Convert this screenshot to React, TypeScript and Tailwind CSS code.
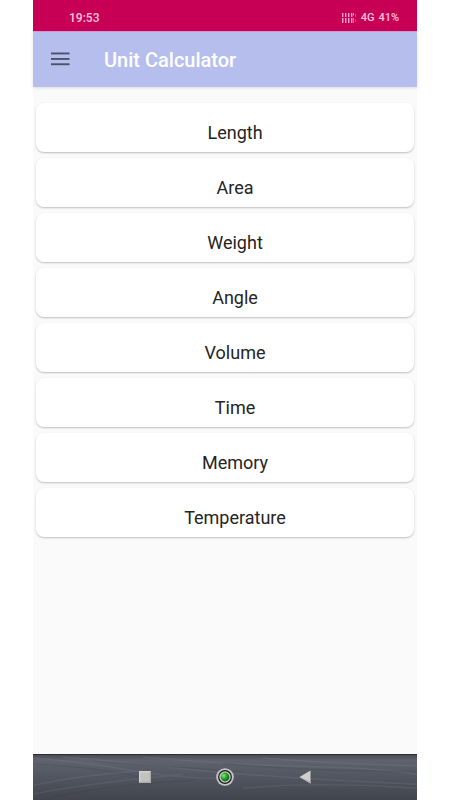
import React from 'react';

const UNITS = ['Length', 'Area', 'Weight', 'Angle', 'Volume', 'Time', 'Memory', 'Temperature'];

const SignalIcon: React.FC = () => (
    <svg width="15" height="10" viewBox="0 0 15 10" fill="#f6a6cc" aria-hidden="true">
        {[0, 3, 6, 9].map((x) => (
            <g key={x}>
                <rect x={x} y="0" width="1.4" height="4" />
                <rect x={x} y="5" width="1.4" height="5" />
            </g>
        ))}
        <rect x="11" y="0" width="1" height="2.5" opacity="0.9" />
        <rect x="11" y="5" width="1" height="5" opacity="0.6" />
        <rect x="13" y="1" width="1" height="3" opacity="0.35" />
        <rect x="13" y="6" width="1" height="3" opacity="0.35" />
    </svg>
);

const StatusBar: React.FC = () => (
    <div className="flex h-8 items-center justify-between border-b border-[#d79bd3] bg-[#c70055] pl-9 pr-[18px] pt-1 text-[#fcc4df]">
        <span className="text-xs font-medium leading-4">19:53</span>
        <div className="flex items-center gap-1 text-[11px] font-medium leading-4">
            <SignalIcon />
            <span>4G</span>
            <span>41%</span>
        </div>
    </div>
);

const AppBar: React.FC = () => (
    <header className="relative flex h-[55px] items-center gap-[34px] bg-[#b6beee] pb-0.5 pl-[18px] shadow-[0_1px_3px_rgba(0,0,0,0.12)]">
        <button type="button" aria-label="Open menu" className="flex">
            <svg width="19" height="14" viewBox="0 0 19 14" fill="#4d516b" aria-hidden="true">
                <rect x="0" y="0.5" width="18.5" height="1.9" />
                <rect x="0" y="6" width="18.5" height="1.9" />
                <rect x="0" y="11.3" width="18.5" height="1.9" />
            </svg>
        </button>
        <h1 className="pt-0.5 text-xl font-medium leading-6 text-white">Unit Calculator</h1>
    </header>
);

const NavBar: React.FC = () => (
    <nav className="relative h-[46px] overflow-hidden border-t border-[#2c2d35] bg-[#4c505a]">
        <svg className="absolute inset-0 h-full w-full" viewBox="0 0 384 46" preserveAspectRatio="none" aria-hidden="true">
            <defs>
                <linearGradient id="metal" x1="0" y1="0" x2="0" y2="1">
                    <stop offset="0" stopColor="#4a4c55" />
                    <stop offset="0.12" stopColor="#5f636d" />
                    <stop offset="0.5" stopColor="#51555f" />
                    <stop offset="1" stopColor="#42454e" />
                </linearGradient>
            </defs>
            <rect width="384" height="46" fill="url(#metal)" />
            <g fill="none" stroke="#9ea3ae" strokeWidth="1.5" opacity="0.13">
                <path d="M0 3 Q50 7 100 16 T200 24" />
                <path d="M30 2 Q100 8 160 15 T384 30" />
                <path d="M110 2 Q200 10 280 12 T384 20" />
                <path d="M230 3 Q300 9 384 11" />
                <path d="M0 40 Q60 28 150 20" />
                <path d="M0 31 Q50 20 110 16" />
                <path d="M210 34 Q280 27 384 34" />
            </g>
            <g fill="none" stroke="#32353e" strokeWidth="1.5" opacity="0.15">
                <path d="M0 9 Q60 12 110 23" />
                <path d="M60 6 Q130 12 210 17" />
                <path d="M190 9 Q280 17 384 17" />
                <path d="M20 43 Q80 30 160 26" />
            </g>
        </svg>
        <div className="relative flex h-full items-center justify-center gap-[62px] pb-0.5">
            <button type="button" aria-label="Recent apps" className="flex w-[18px] justify-center">
                <svg width="14" height="14" viewBox="0 0 14 14" aria-hidden="true">
                    <rect x="1" y="1" width="12" height="12" fill="#c2c3c1" />
                    <path d="M1 13V1h12l-1.5 1.5h-9v9z" fill="#d2d3d1" />
                    <path d="M13 1v12H1l1.5-1.5h9v-9z" fill="#adaeac" />
                </svg>
            </button>
            <button type="button" aria-label="Home" className="flex">
                <svg width="18" height="18" viewBox="0 0 18 18" aria-hidden="true">
                    <defs>
                        <radialGradient id="led" cx="0.35" cy="0.35" r="0.7">
                            <stop offset="0" stopColor="#8fe08a" />
                            <stop offset="0.45" stopColor="#31ad30" />
                            <stop offset="1" stopColor="#0b5c10" />
                        </radialGradient>
                    </defs>
                    <circle cx="9" cy="9" r="8.8" fill="#c4c5c3" />
                    <circle cx="9" cy="9" r="6.9" fill="#17181b" />
                    <circle cx="9" cy="9" r="5.7" fill="#c9cac8" />
                    <circle cx="9" cy="9" r="4.4" fill="url(#led)" />
                </svg>
            </button>
            <button type="button" aria-label="Back" className="flex w-[18px] justify-center">
                <svg width="12" height="14" viewBox="0 0 12 14" aria-hidden="true">
                    <path d="M0.5 7 L11.5 0.5 V13.5 Z" fill="#cfd0ce" />
                    <path d="M0.5 7 L11.5 13.5 V11.5 Z" fill="#b0b1af" />
                </svg>
            </button>
        </div>
    </nav>
);

const App: React.FC = () => (
    <div className="min-h-screen bg-white px-[33px] font-[Roboto,sans-serif]">
        <div className="flex min-h-screen flex-col bg-[#fafafa]">
            <StatusBar />
            <AppBar />
            <main className="flex flex-1 flex-col gap-1.5 px-[3px] pb-4 pt-4">
                {UNITS.map((unit) => (
                    <button
                        key={unit}
                        type="button"
                        className="h-[49px] w-full rounded-lg bg-white pl-5 pt-2.5 text-center text-lg leading-6 text-[#242424] shadow-[0_1px_2px_rgba(0,0,0,0.24)]"
                    >
                        {unit}
                    </button>
                ))}
            </main>
            <NavBar />
        </div>
    </div>
);

export default App;
